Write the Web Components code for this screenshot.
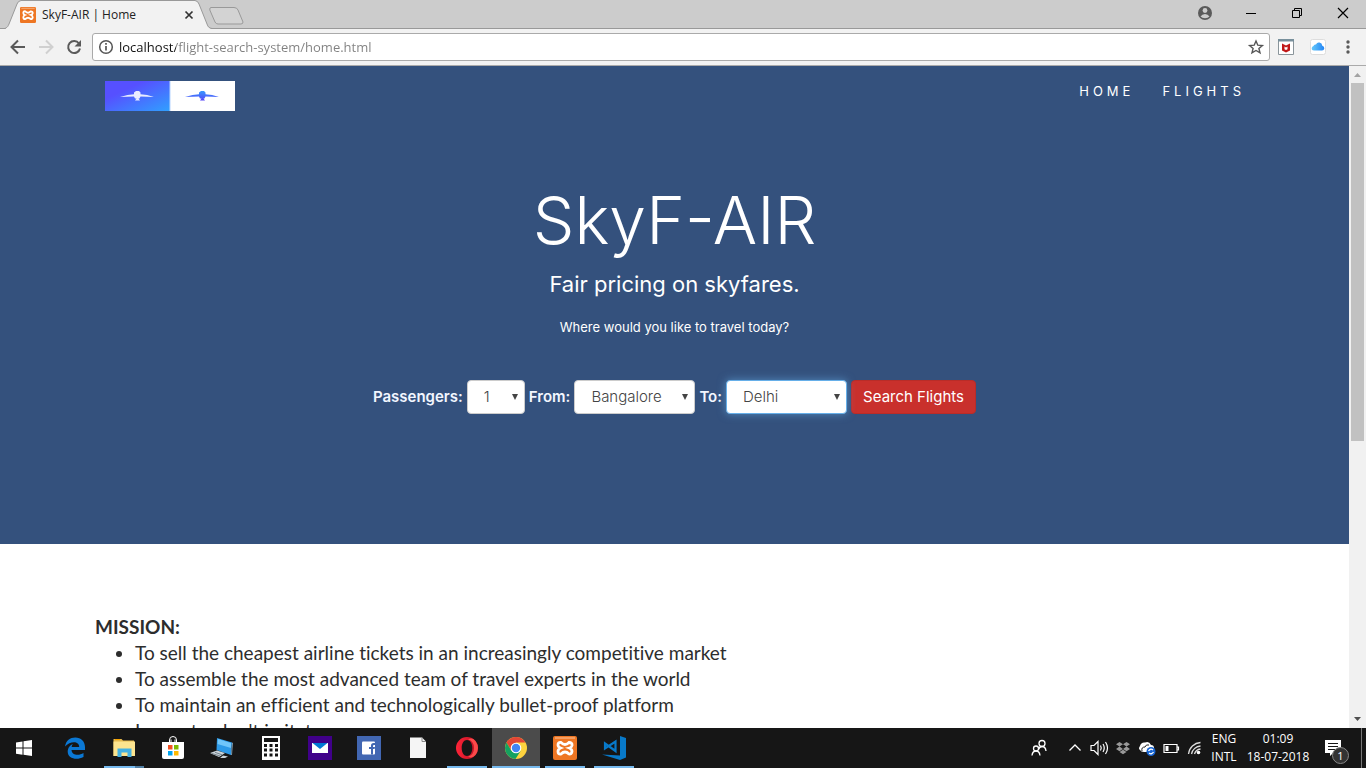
<!DOCTYPE html>
<html lang="en">
<head>
<meta charset="utf-8">
<title>SkyF-AIR | Home</title>
<style>
html, body { margin: 0; height: 100%; }
body { font: 12px/16px "Open Sans", "Noto Sans", sans-serif; overflow: hidden; }
</style>
</head>
<body>
<desktop-shell></desktop-shell>

<template id="desktop-shell">
  <style>
    :host { display: flex; flex-direction: column; height: 100vh; }
    .view { flex: 1; min-height: 0; display: flex; background: #fff; }
    main { flex: 1; min-width: 0; overflow: hidden; }
  </style>
  <tab-strip></tab-strip>
  <browser-toolbar></browser-toolbar>
  <div class="view">
    <main><site-hero></site-hero><site-mission></site-mission></main>
    <scroll-bar></scroll-bar>
  </div>
  <task-bar></task-bar>
</template>

<template id="tab-strip">
  <style>
    :host { display: flex; height: 28px; background: #cccccc; border-bottom: 1px solid #999; padding-left: 5px; }
    .tab { position: relative; width: 207px; height: 29px; display: flex; align-items: center; gap: 6px; padding: 0 17px 0 15px; box-sizing: border-box; color: #222; }
    .shape { position: absolute; left: 0; top: 0; }
    .tab > :not(.shape) { position: relative; }
    .title { flex: 1; }
    .new { margin: 7px 0 0 -3px; height: 18px; }
    .window { margin-left: auto; display: flex; }
    button { border: 0; padding: 0; background: none; display: block; }
    .window button { width: 46px; height: 26px; display: grid; place-items: center; }
  </style>
  <div class="tab">
    <svg class="shape" width="207" height="29"><path d="M0 29C3 27 3 26 4 24L12 4Q13 1 16 .5H190Q193 1 194 4L202 24C203 27 204 28 207 29Z" fill="#f2f2f2"/><path d="M0 28.5C3 27 3 26 4 24L12 4Q13 1 16 .5H190Q193 1 194 4L202 24C203 27 204 28 207 28.5" fill="none" stroke="#999"/></svg>
    <ui-icon name="xampp" style="--size:16px"></ui-icon>
    <span class="title">SkyF-AIR | Home</span>
    <button aria-label="Close tab"><ui-icon name="close" style="--size:12px"></ui-icon></button>
  </div>
  <button class="new" aria-label="New tab"><svg width="36" height="18"><path d="M2 .5H25Q28 .5 29 3L34 15Q34 17 32 17H9Q7 17 6 15L.8 3Q.5 .5 2 .5Z" fill="#d3d3d3" stroke="#999"/></svg></button>
  <div class="window">
    <button aria-label="Profile"><ui-icon name="profile"></ui-icon></button>
    <button aria-label="Minimise"><ui-icon name="minimise"></ui-icon></button>
    <button aria-label="Restore"><ui-icon name="restore"></ui-icon></button>
    <button aria-label="Close"><ui-icon name="winclose"></ui-icon></button>
  </div>
</template>

<template id="browser-toolbar">
  <style>
    :host { display: flex; align-items: center; height: 36px; background: #f2f2f2; border-bottom: 1px solid #aaa; padding: 0 8px; }
    button { border: 0; padding: 0; background: none; display: block; }
    .nav { display: flex; gap: 8px; margin-right: 8px; }
    .box { flex: 1; display: flex; align-items: center; gap: 3px; height: 26px; border: 1px solid #aaa; border-radius: 3px; background: #fff; padding: 0 3px; }
    input { flex: 1; min-width: 0; border: 0; padding: 0; outline: 0; font: 13px/20px "Open Sans", "Noto Sans", sans-serif; color: #808080;
      background: linear-gradient(90deg, #111 57px, #808080 57px); -webkit-background-clip: text; background-clip: text; -webkit-text-fill-color: transparent; }
    .ext { display: flex; gap: 12px; margin: 0 10px 0 6px; }
  </style>
  <div class="nav">
    <button aria-label="Back"><ui-icon name="back"></ui-icon></button>
    <button aria-label="Forward"><ui-icon name="forward"></ui-icon></button>
    <button aria-label="Reload"><ui-icon name="reload"></ui-icon></button>
  </div>
  <div class="box">
    <ui-icon name="info"></ui-icon>
    <input aria-label="Address" value="localhost/flight-search-system/home.html">
    <button aria-label="Bookmark"><ui-icon name="star"></ui-icon></button>
  </div>
  <div class="ext">
    <button aria-label="McAfee"><ui-icon name="mcafee"></ui-icon></button>
    <button aria-label="iCloud"><ui-icon name="cloud"></ui-icon></button>
  </div>
  <button aria-label="Menu"><ui-icon name="dots"></ui-icon></button>
</template>

<template id="site-hero">
  <style>
    :host { display: block; background: #34517d; color: #fff; font-family: Inter, "Open Sans", sans-serif; padding-bottom: 130px; text-align: center; }
    header { display: flex; justify-content: space-between; padding: 15px 104px 0 105px; }
    nav { display: flex; gap: 28px; }
    nav a { color: #fff; text-decoration: none; font-size: 13px; line-height: 20px; letter-spacing: 4px; }
    h1 { margin: 70px 0 0; font-size: 66px; line-height: 78px; font-weight: 300; }
    h2 { margin: 12px 0 0; font-size: 22px; line-height: 26px; font-weight: 400; }
    p { margin: 21px 0 0; font-size: 13px; line-height: 18px; }
    search-form { margin-top: 44px; }
  </style>
  <header>
    <a href="#" aria-label="SkyF-AIR"><site-logo></site-logo></a>
    <nav><a href="#">HOME</a><a href="#">FLIGHTS</a></nav>
  </header>
  <h1>SkyF-AIR</h1>
  <h2>Fair pricing on skyfares.</h2>
  <p>Where would you like to travel today?</p>
  <search-form></search-form>
</template>

<template id="site-logo">
  <style>:host { display: block; } svg { display: block; }</style>
  <svg width="130" height="30" viewBox="0 0 130 30">
    <defs>
      <linearGradient id="g" x1="0" y1="0" x2="1" y2="1"><stop offset=".3" stop-color="#5650ff"/><stop offset="1" stop-color="#30a0ff"/></linearGradient>
      <linearGradient id="h" x1="0" y1="0" x2="0" y2="1"><stop offset="0" stop-color="#3898ff"/><stop offset="1" stop-color="#5545f8"/></linearGradient>
      <path id="p" d="M0 16Q8 13.500 14 13.300V11.500L16 10H19L20.500 11.500V13.300Q27 13.500 34 16L20.500 15.500L19.500 17.500H18.500L20 19.500H15L16.500 17.500H15L14 15.500Z"/>
    </defs>
    <path d="M0 0H65V30H0Z" fill="url(#g)"/><path d="M65 0H130V30H65Z" fill="#fff"/><path d="M65 0V30" stroke="#b8d5ff"/>
    <use href="#p" x="15" fill="#e9ecff"/><use href="#p" x="80" fill="url(#h)"/>
  </svg>
</template>

<template id="search-form">
  <style>
    :host { display: block; }
    form { display: flex; justify-content: center; align-items: center; gap: 4px; font-size: 16px; line-height: 20px; }
    label { font-size: 15px; font-weight: 600; color: #f2f6ff; }
    .pick { position: relative; display: flex; }
    .pick::after { content: ""; position: absolute; right: 7px; top: 14px; border: 3px solid transparent; border-top: 6px solid #444; border-bottom: 0; pointer-events: none; }
    select { appearance: none; width: 121px; height: 34px; box-sizing: border-box; border: 1px solid #ccc; border-radius: 4px; background: #fff; padding: 0 16px; font: 300 15px/20px Inter, "Open Sans", sans-serif; color: #444; }
    #passengers { width: 58px; }
    #to { border-color: #66afe9; box-shadow: 0 0 8px rgba(102, 175, 233, .6); }
    button { width: 125px; height: 34px; border: 1px solid #b92c28; border-radius: 4px; background: #c9302c; color: #fff; padding: 0; font: 400 15px/20px Inter, "Open Sans", sans-serif; }
  </style>
  <form>
    <label for="passengers">Passengers:</label>
    <span class="pick"><select id="passengers"><option>1</option></select></span>
    <label for="from">From:</label>
    <span class="pick"><select id="from"><option>Bangalore</option></select></span>
    <label for="to">To:</label>
    <span class="pick"><select id="to"><option>Delhi</option></select></span>
    <button type="button">Search Flights</button>
  </form>
</template>

<template id="site-mission">
  <style>
    :host { display: block; padding: 70px 95px; font: 19px/26px Lato, sans-serif; font-variant-ligatures: none; color: #2d2d2d; }
    h3 { margin: 0; font-size: 19px; font-weight: 700; line-height: 26px; }
    ul { margin: 0; padding-left: 40px; }
  </style>
  <h3>MISSION:</h3>
  <ul>
    <li>To sell the cheapest airline tickets in an increasingly competitive market</li>
    <li>To assemble the most advanced team of travel experts in the world</li>
    <li>To maintain an efficient and technologically bullet-proof platform</li>
    <li>Innovate, don't imitate</li>
  </ul>
</template>

<template id="scroll-bar">
  <style>
    :host { display: flex; flex-direction: column; align-items: center; width: 17px; background: #f1f1f1; }
    svg { display: block; flex: none; }
    .track { flex: 1; width: 13px; }
    .thumb { height: 57%; background: #c1c1c1; }
  </style>
  <svg width="17" height="17"><path d="M5 11L8.500 7L12 11Z" fill="#a3a3a3"/></svg>
  <div class="track"><div class="thumb"></div></div>
  <svg width="17" height="17"><path d="M5 6L8.500 10L12 6Z" fill="#505050"/></svg>
</template>

<template id="task-bar">
  <style>
    :host { display: flex; height: 40px; background: #161616; color: #fff; }
    .apps { display: flex; gap: 1px; }
    .tray { margin-left: auto; display: flex; align-items: center; }
    .text { text-align: center; line-height: 18px; }
    .lang { width: 38px; }
    .clock { width: 70px; }
    .note { position: relative; width: 48px; height: 40px; box-sizing: border-box; padding-right: 8px; display: grid; place-items: center; }
    .badge { position: absolute; left: 19px; top: 19px; width: 15px; height: 15px; border: 1px solid #888; border-radius: 50%; background: #333; font-size: 11px; line-height: 15px; text-align: center; }
    .edge { width: 4px; height: 40px; border-left: 1px solid #777; }
    .people { margin-right: 12px; }
    .wifi { margin: 0 0 0 2px; }
    ui-icon { --size: 24px; }
    .start { margin-right: 2px; }
  </style>
  <div class="apps">
    <task-app class="start" label="Start"><ui-icon name="windows"></ui-icon></task-app>
    <task-app label="Edge"><ui-icon name="edge"></ui-icon></task-app>
    <task-app label="File Explorer" open grouped><ui-icon name="folder"></ui-icon></task-app>
    <task-app label="Store"><ui-icon name="store"></ui-icon></task-app>
    <task-app label="Remote Desktop"><ui-icon name="computer"></ui-icon></task-app>
    <task-app label="Calculator"><ui-icon name="calc"></ui-icon></task-app>
    <task-app label="Mail"><ui-icon name="mail"></ui-icon></task-app>
    <task-app label="Facebook"><ui-icon name="facebook"></ui-icon></task-app>
    <task-app label="Document"><ui-icon name="file"></ui-icon></task-app>
    <task-app label="Opera" open><ui-icon name="opera"></ui-icon></task-app>
    <task-app label="Chrome" open active><ui-icon name="chrome"></ui-icon></task-app>
    <task-app label="XAMPP" open><ui-icon name="xampp"></ui-icon></task-app>
    <task-app label="Visual Studio Code" open><ui-icon name="vscode"></ui-icon></task-app>
  </div>
  <div class="tray">
    <ui-icon class="people" name="people"></ui-icon>
    <ui-icon name="chevron"></ui-icon>
    <ui-icon name="speaker"></ui-icon>
    <ui-icon name="dropbox"></ui-icon>
    <ui-icon name="onedrive"></ui-icon>
    <ui-icon name="battery"></ui-icon>
    <ui-icon class="wifi" name="wifi" style="--size:20px"></ui-icon>
    <div class="text lang">ENG<br>INTL</div>
    <div class="text clock">01:09<br>18-07-2018</div>
    <div class="note"><ui-icon name="note"></ui-icon><span class="badge">1</span></div>
    <div class="edge"></div>
  </div>
</template>

<template id="task-app">
  <style>
    :host { display: block; width: 48px; height: 40px; }
    button { width: 100%; height: 100%; border: 0; padding: 0; background: none; display: grid; place-items: center; }
    :host([open]) button { background: linear-gradient(#76b9ed, #76b9ed) bottom / 40px 2px no-repeat; }
    :host([grouped]) button { background: linear-gradient(90deg, #76b9ed 31px, #507ea3 31px) bottom / 40px 2px no-repeat; }
    :host([active]) button { background: linear-gradient(#76b9ed, #76b9ed) bottom / 48px 2px no-repeat #4b4b4b; }
  </style>
  <button><slot></slot></button>
</template>

<script>
const icons = {
  xampp: ['24', '<rect width="24" height="24" rx="2" fill="#ee7623"/><path d="M2 2h20" stroke="#f6ad78" stroke-width="1.500"/><path d="M8 6.500Q12 10.500 16 6.500Q19.500 6.500 19 9.500Q18.500 11.500 16.500 12Q19 13 19 15.500Q18.500 18.500 16 18Q12 14 8 18Q5 18.500 5 15.500Q5 13 7.500 12Q5 11 5 9Q5 6 8 6.500Z" fill="#ee7623" stroke="#fff" stroke-width="2.800"/>'],
  close: ['12', '<path d="M2.500 2.500l7 7M9.500 2.500l-7 7" stroke="#333" stroke-width="1.700"/>'],
  profile: ['20', '<circle cx="10" cy="10" r="7" fill="#5a5a5a"/><circle cx="10" cy="7.500" r="2.400" fill="#ccc"/><path d="M5.500 13.500Q7 11 10 11T14.500 13.500Q13 15.300 10 15.300T5.500 13.500Z" fill="#ccc"/>'],
  minimise: ['20', '<path d="M5 10.500h10" stroke="#000"/>'],
  restore: ['20', '<path d="M5.500 7.500h7v7h-7zM7.500 7.500v-2h7v7h-2" fill="none" stroke="#000"/>'],
  winclose: ['20', '<path d="M5 5l10 10M15 5L5 15" stroke="#000" stroke-width="1.200"/>'],
  back: ['20', '<path d="M17 10H4M10 3.500L3.500 10L10 16.500" fill="none" stroke="#5a5a5a" stroke-width="2"/>'],
  forward: ['20', '<path d="M3 10H16M10 3.500L16.500 10L10 16.500" fill="none" stroke="#d0d0d0" stroke-width="2"/>'],
  reload: ['20', '<path d="M15 6.500A6 6 0 1 0 16 11.500" fill="none" stroke="#5a5a5a" stroke-width="2"/><path d="M17 3v6.500h-6.500z" fill="#5a5a5a"/>'],
  info: ['20', '<circle cx="10" cy="10" r="6.300" fill="none" stroke="#555" stroke-width="1.500"/><path d="M10 9v4.500M10 6v1.700" stroke="#555" stroke-width="1.700"/>'],
  star: ['20', '<path d="M10 4l1.800 4.200l4.600.3l-3.500 3l1.100 4.400L10 13.500L6 15.900l1.100-4.400l-3.500-3l4.600-.3z" fill="none" stroke="#555" stroke-width="1.400"/>'],
  mcafee: ['20', '<path d="M2.500 2.500h15v15h-15z" fill="#fff" stroke="#8a959b"/><path d="M2 2h16v2.500H2z" fill="#78909c"/><path d="M6 6.500l4 2l4-2v7L10 15.500L6 13.500Z" fill="#c01818"/><path d="M8.500 9.500l1.500 1l1.500-1v2.700L10 13L8.500 12.200Z" fill="#fff"/>'],
  cloud: ['20', '<defs><linearGradient id="c"><stop stop-color="#64c8fa"/><stop offset="1" stop-color="#2385f5"/></linearGradient></defs><rect x="2.500" y="2.500" width="15" height="15" rx="2" fill="#fff" stroke="#ddd"/><path d="M6 13.500Q3.500 13.500 3.700 11Q4 9.500 5.500 9Q6 7 8 7.500Q9 5 11.500 5.500Q14 6 14.300 8.700Q16.500 9.500 16.300 11.500Q16 13.500 14 13.500Z" fill="url(#c)"/>'],
  dots: ['20', '<g fill="#5a5a5a"><circle cx="10" cy="5" r="1.700"/><circle cx="10" cy="10" r="1.700"/><circle cx="10" cy="15" r="1.700"/></g>'],
  windows: ['24', '<path d="M4 6.500L10.500 5.500V11.500H4ZM11.500 5.300L20 4V11.500H11.500ZM4 12.500H10.500V18.700L4 17.700ZM11.500 12.500H20V20L11.500 18.800Z" fill="#fff"/>'],
  edge: ['24', '<path d="M2 10.500C3 4.500 7 1.500 12.300 1.500C18 1.500 22 5.500 22 11V14H8.500C9 19.500 16 20 20.500 17V21C13 25 4.500 22 4.700 15.500C4.800 12 7 9 10 8C9 9.200 8.800 10 8.700 11H16.200C16.200 4.500 7 5 2 10.500Z" fill="#0b78d4"/>'],
  folder: ['24', '<path d="M1.500 3h8l1.500 1.500h11V20h-20.500z" fill="#e5b94e"/><path d="M1.500 5.500h21.500V20H1.500z" fill="#fce48f"/><path d="M3 3.500h5" stroke="#f6a300"/><path d="M5.500 12.500h14v8.500h-4v-4.500h-6v4.500h-4z" fill="#44b1e2"/>'],
  store: ['24', '<path d="M8.500 7V4a3.500 3.500 0 0 1 7 0V7M10 7V3.500M14 7V3.500" fill="none" stroke="#fff"/><path d="M1 6h22v15q0 2-2 2H3q-2 0-2-2z" fill="#fff"/><path d="M7 9h4.500v4.500H7z" fill="#f25022"/><path d="M13 9h4.500v4.500H13z" fill="#7fba00"/><path d="M7 15h4.500v4.500H7z" fill="#00a4ef"/><path d="M13 15h4.500v4.500H13z" fill="#ffb900"/>'],
  computer: ['24', '<path d="M7 2L22 6.500L21 19L6.500 14Z" fill="#2d9ae8"/><path d="M8 3L21 7V12L7.500 8Z" fill="#70c6fa"/><path d="M21 19l1-12.500l1 .5l-1 12z" fill="#8397a4"/><path d="M0 17l7-2.500l8 2.500l-6 4zM13 19.500l5 1l-3 1.500h-5z" fill="#cad4da"/><path d="M2 17.500l8 2.500M5 16.300l7 2.500" stroke="#77838b"/>'],
  calc: ['24', '<path d="M3 0h18v24H3z" fill="#fff"/><path d="M5 2h14v4H5z" fill="#151515"/><path d="M5 9.500h14M5 14h14M5 19h14" stroke="#151515" stroke-width="3" stroke-dasharray="3 2.500"/>'],
  mail: ['24', '<path d="M0 0h24v24H0z" fill="#40008a"/><path d="M4 7h16v10H4z" fill="#fff"/><path d="M4.500 7h15L12 13z" fill="#0078d4"/>'],
  facebook: ['24', '<path d="M0 0h24v24H0z" fill="#4267b2"/><rect x="5" y="5.500" width="13" height="13" rx="1" fill="#fff"/><path d="M14 18.500V13h-2v-2h2V9.500Q14 7 16.500 7H18v2h-1Q16 9 16 10v1h2l-.4 2H16v5.500z" fill="#4267b2"/>'],
  file: ['24', '<path d="M4 1.500h12l4 4V22H4z" fill="#f5f5f5"/><path d="M16 1.500v4h4" fill="none" stroke="#888"/>'],
  opera: ['24', '<defs><linearGradient id="o"><stop stop-color="#ff2438"/><stop offset="1" stop-color="#b70f20"/></linearGradient></defs><path fill-rule="evenodd" d="M12 1a11 11 0 1 0 0 22a11 11 0 1 0 0-22M12 4c3.200 0 5.300 3.500 5.300 8s-2.100 8-5.300 8s-5.300-3.500-5.300-8s2.100-8 5.300-8" fill="url(#o)"/><path d="M13 3.500Q19 5 19 12T13 20.500Q17 23 20.500 19Q25.500 12 20.500 5Q17 1 13 3.500Z" fill="#fb4a4a"/>'],
  chrome: ['24', '<circle cx="12" cy="12" r="11" fill="#fdd23e"/><path d="M2.500 6.500A11 11 0 0 1 21.500 6.500H12L7.500 15Z" fill="#e24636"/><path d="M2.500 6.500A11 11 0 0 0 11.500 23L16.700 14.700L12 17L7.300 14.700Z" fill="#14a160"/><circle cx="12" cy="12" r="5.300" fill="#fff"/><circle cx="12" cy="12" r="4.200" fill="#4285f4"/>'],
  vscode: ['24', '<path d="M18 0L24 2V21.500L18 24L0 18.500L18 19.500Z" fill="#0879c9"/><path d="M13.500 5.500V15L3 7.500V12.500Z" fill="none" stroke="#0879c9" stroke-width="2.200"/>'],
  people: ['24', '<g fill="none" stroke="#fff" stroke-width="1.300"><circle cx="15" cy="7.500" r="3"/><path d="M11.500 13.500Q12.500 10.500 15 10.500Q18.500 10.500 19 15"/><circle cx="9" cy="12.500" r="2.500"/><path d="M5 19.500Q5.500 15 9 15T13 19.500"/></g>'],
  chevron: ['24', '<path d="M6.500 14.500L12 9L17.500 14.500" fill="none" stroke="#fff" stroke-width="1.300"/>'],
  speaker: ['24', '<path d="M4 9.500h3l4-4v13l-4-4H4zM13.500 9.500q1.500 2.500 0 5M16 8q2.500 4 0 8M18.500 6q4 6 0 12" fill="none" stroke="#fff" stroke-width="1.200"/>'],
  dropbox: ['24', '<path d="M8.500 6l3.500 2.300L8.500 10.600L5 8.300zM15.500 6L19 8.300L15.500 10.600L12 8.300zM8.500 10.600L12 12.900L8.500 15.200L5 12.900zM15.500 10.600L19 12.900L15.500 15.200L12 12.900zM8.500 16L12 13.800L15.500 16L12 18.200z" fill="#999"/>'],
  onedrive: ['24', '<path d="M5 14Q3 12.500 5 10Q6 6 10 6.500Q14 4.500 16 9Q19 9 19 12L18 16H9Q6 16 5 14Z" fill="#fff"/><path d="M7 15Q6 11 10 11Q11 8 14 9" fill="none" stroke="#222"/><circle cx="16" cy="15.500" r="4.500" fill="#1764d1"/><path d="M13.500 15q2-3 4.500-1M18.500 16q-2 3-4.500 1" fill="none" stroke="#fff" stroke-width="1.300"/>'],
  battery: ['24', '<path d="M5 8.500h13v8H5zM18 11h1.500v3H18" fill="none" stroke="#fff" stroke-width="1.200"/><path d="M6.500 10h3v5h-3z" fill="#fff"/>'],
  wifi: ['20', '<g fill="none" stroke="#ddd" stroke-width="1.300"><path d="M3.500 16A13 13 0 0 1 15.500 4.500M6.500 16A10 10 0 0 1 15.500 8M9.500 16A7 7 0 0 1 15.500 11"/></g><circle cx="13.500" cy="14.500" r="1.800" fill="#fff"/>'],
  note: ['24', '<path d="M4 4h16v13h-8l-3 3v-3H4z" fill="#fff"/><path d="M7 7.500h10M7 10.500h10M7 13.500h7" stroke="#161616"/>']
};

class TemplateElement extends HTMLElement {
  constructor() {
    super();
    this.attachShadow({ mode: 'open' }).append(document.getElementById(this.localName).content.cloneNode(true));
  }
}

class UiIcon extends HTMLElement {
  connectedCallback() {
    if (this.shadowRoot) return;
    const [box, shapes] = icons[this.getAttribute('name')];
    this.attachShadow({ mode: 'open' }).innerHTML =
      `<style>:host{display:block;flex:none;width:var(--size,20px);height:var(--size,20px)}svg{display:block;width:100%;height:100%}</style>
       <svg viewBox="0 0 ${box} ${box}" aria-hidden="true">${shapes}</svg>`;
  }
}

class TaskApp extends TemplateElement {
  connectedCallback() {
    this.shadowRoot.querySelector('button').setAttribute('aria-label', this.getAttribute('label'));
  }
}

customElements.define('ui-icon', UiIcon);
customElements.define('task-app', TaskApp);
for (const name of ['site-logo', 'search-form', 'site-hero', 'site-mission', 'scroll-bar', 'task-bar', 'browser-toolbar', 'tab-strip', 'desktop-shell'])
  customElements.define(name, class extends TemplateElement {});
</script>
</body>
</html>
